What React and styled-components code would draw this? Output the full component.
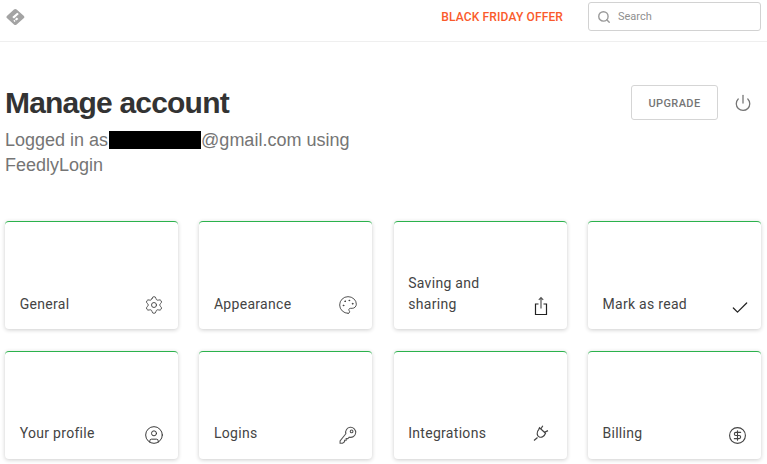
import React from 'react';
import styled, {createGlobalStyle} from 'styled-components';
import {Settings, Palette, Check, CircleUser, Power, Search, CircleDollarSign} from 'lucide-react';

const Global=createGlobalStyle`
  html,body{
    margin:0;
    padding:0;
    background:#fff;
    overflow:hidden;
  }
  *{box-sizing:border-box;}
`;

const ShareIcon=()=>(
  <svg width="18" height="20" viewBox="0 0 18 20" fill="none" stroke="#222" strokeWidth="1.2">
    <path d="M6.500 9H3.500V19.500H14.500V9H11.500"/>
    <path d="M9 13.500V2.500M6.800 4.800L9 2.500L11.200 4.800" stroke="#555"/>
  </svg>
);

const KeyIcon=()=>(
  <svg width="18" height="18" viewBox="0 0 20 20" fill="none" stroke="#555" strokeWidth="1.2">
    <path d="M7.600 8.600a5.600 5.600 0 1 1 3.800 3.800L9.800 14H8v1.800H6.200v1.700L4 19.200H1.200v-2.600z"/>
    <circle cx="14" cy="6" r="1.500"/>
  </svg>
);

const PlugIcon=()=>(
  <svg width="18" height="18" viewBox="0 0 18 18" fill="none" stroke="#444" strokeWidth="1.2">
    <path d="M2 16.500l3.500-3"/>
    <path d="M7.500 3.800l6 5.400c-1 2.600-3.600 4.800-6.200 3.800-2.500-1-3-5-.6-7.400z"/>
    <path d="M9 4.800L10.800 1.800M12.400 8.400l3.600-1.800"/>
  </svg>
);

const Logo=()=>(
  <svg width="19" height="18" viewBox="0 0 20 18">
    <path d="M8.400 1.200a2 2 0 0 1 2.800 0l7.400 6.400a1.800 1.800 0 0 1 0 2.700l-7.400 6.500a2 2 0 0 1-2.800 0L1.200 10.300a1.800 1.800 0 0 1 0-2.700z" fill="#a3a3a3"/>
    <path d="M6.600 9l5.200-4.600 1.700 1.500L8.400 10.500zM9.400 11.400l2-1.800 1.600 1.400-2 1.800zM7.800 13l1-1 1.300 1.200-1 1z" fill="#fff"/>
  </svg>
);

const cards=[
  {title:'General',icon:<Settings size={20} strokeWidth={1.1} color="#444"/>},
  {title:'Appearance',icon:<Palette size={20} strokeWidth={1.1} color="#444"/>},
  {title:'Saving and sharing',icon:<ShareIcon/>,right:3},
  {title:'Mark as read',icon:<Check size={20} strokeWidth={1.5} color="#222"/>,right:-3,bottom:-3},
  {title:'Your profile',icon:<CircleUser size={20} strokeWidth={1.15} color="#333"/>,up:true},
  {title:'Logins',icon:<KeyIcon/>,up:true,right:1,bottom:1},
  {title:'Integrations',icon:<PlugIcon/>,up:true,right:3,bottom:3},
  {title:'Billing',icon:<CircleDollarSign size={19} strokeWidth={1.4} color="#444"/>,up:true},
];

function App() {
  return (
    <Page>
      <Global/>
      <TopBar>
        <Logo/>
        <Right>
          <Offer>BLACK FRIDAY OFFER</Offer>
          <SearchBox>
            <Search size={14} strokeWidth={2.4} color="#9a9a9a"/>
            <SearchText>Search</SearchText>
          </SearchBox>
        </Right>
      </TopBar>
      <Header>
        <div>
          <Title>Manage account</Title>
          <Sub>Logged in as<Redacted/>@gmail.com using<br/>FeedlyLogin</Sub>
        </div>
        <Actions>
          <Upgrade>UPGRADE</Upgrade>
          <Power size={18} strokeWidth={1.7} color="#757575"/>
        </Actions>
      </Header>
      <Grid>
        {cards.map((c)=>(
          <Card key={c.title}>
            <CardTitle $up={c.up}>{c.title}</CardTitle>
            <CardIcon $right={c.right} $bottom={c.bottom}>{c.icon}</CardIcon>
          </Card>
        ))}
      </Grid>
    </Page>
  );
}

const Page=styled.div`
  width:767px;
  height:464px;
  overflow:hidden;
  background:#fff;
`;

const TopBar=styled.div`
  height:42px;
  border-bottom:1px solid #efefef;
  padding:0 6px;
  display:flex;
  justify-content:space-between;
  align-items:flex-start;
  svg{display:block;}
  & > svg{margin-top:8px;}
`;

const Right=styled.div`
  display:flex;
  align-items:center;
  margin-top:2px;
`;

const Offer=styled.span`
  font:500 12px Roboto,sans-serif;
  letter-spacing:.14px;
  color:#fa5a2b;
  margin-right:25px;
  margin-top:1px;
`;

const SearchBox=styled.div`
  width:173px;
  height:29px;
  border:1px solid #d2d2d2;
  border-radius:3px;
  display:flex;
  align-items:center;
  padding-left:8px;
`;

const SearchText=styled.span`
  font:400 11px Roboto,sans-serif;
  color:#8f8f8f;
  margin-left:7px;
`;

const Header=styled.div`
  height:179px;
  display:flex;
  justify-content:space-between;
  align-items:flex-start;
  padding:0 15px 0 5px;
`;

const Title=styled.h1`
  margin:43px 0 0;
  font:700 30px/36px "Liberation Sans",Arial,sans-serif;
  letter-spacing:-.8px;
  color:#333;
`;

const Sub=styled.p`
  margin:7px 0 0;
  font:400 18px/25px "Liberation Sans",Arial,sans-serif;
  color:#757575;
`;

const Redacted=styled.span`
  display:inline-block;
  width:92px;
  height:18px;
  margin-left:1px;
  background:#000;
  vertical-align:-3px;
`;

const Actions=styled.div`
  display:flex;
  align-items:center;
  gap:16px;
  margin-top:43px;
`;

const Upgrade=styled.button`
  width:87px;
  height:35px;
  background:#fff;
  border:1px solid #d5d5d5;
  border-radius:3px;
  font:500 11px Roboto,sans-serif;
  letter-spacing:.4px;
  color:#757575;
  padding:2px 0 0;
`;

const Grid=styled.div`
  display:grid;
  grid-template-columns:repeat(4,173px);
  grid-auto-rows:108px;
  column-gap:21.250px;
  row-gap:22px;
  padding-left:5px;
`;

const Card=styled.div`
  position:relative;
  border-top:1px solid #2bb24c;
  border-radius:4px;
  background:#fff;
  box-shadow:0 1px 4px rgba(0,0,0,.2);
  padding:0 14px 14px 14.700px;
  display:flex;
  justify-content:space-between;
  align-items:flex-end;
`;

const CardTitle=styled.div`
  font:400 14px/21px Roboto,sans-serif;
  letter-spacing:.3px;
  color:#444;
  max-width:100px;
  margin-bottom:${p=>p.$up?'1px':'0'};
`;

const CardIcon=styled.div`
  display:flex;
  margin-bottom:${p=>p.$bottom||0}px;
  margin-right:${p=>p.$right||0}px;
`;

export default App;
